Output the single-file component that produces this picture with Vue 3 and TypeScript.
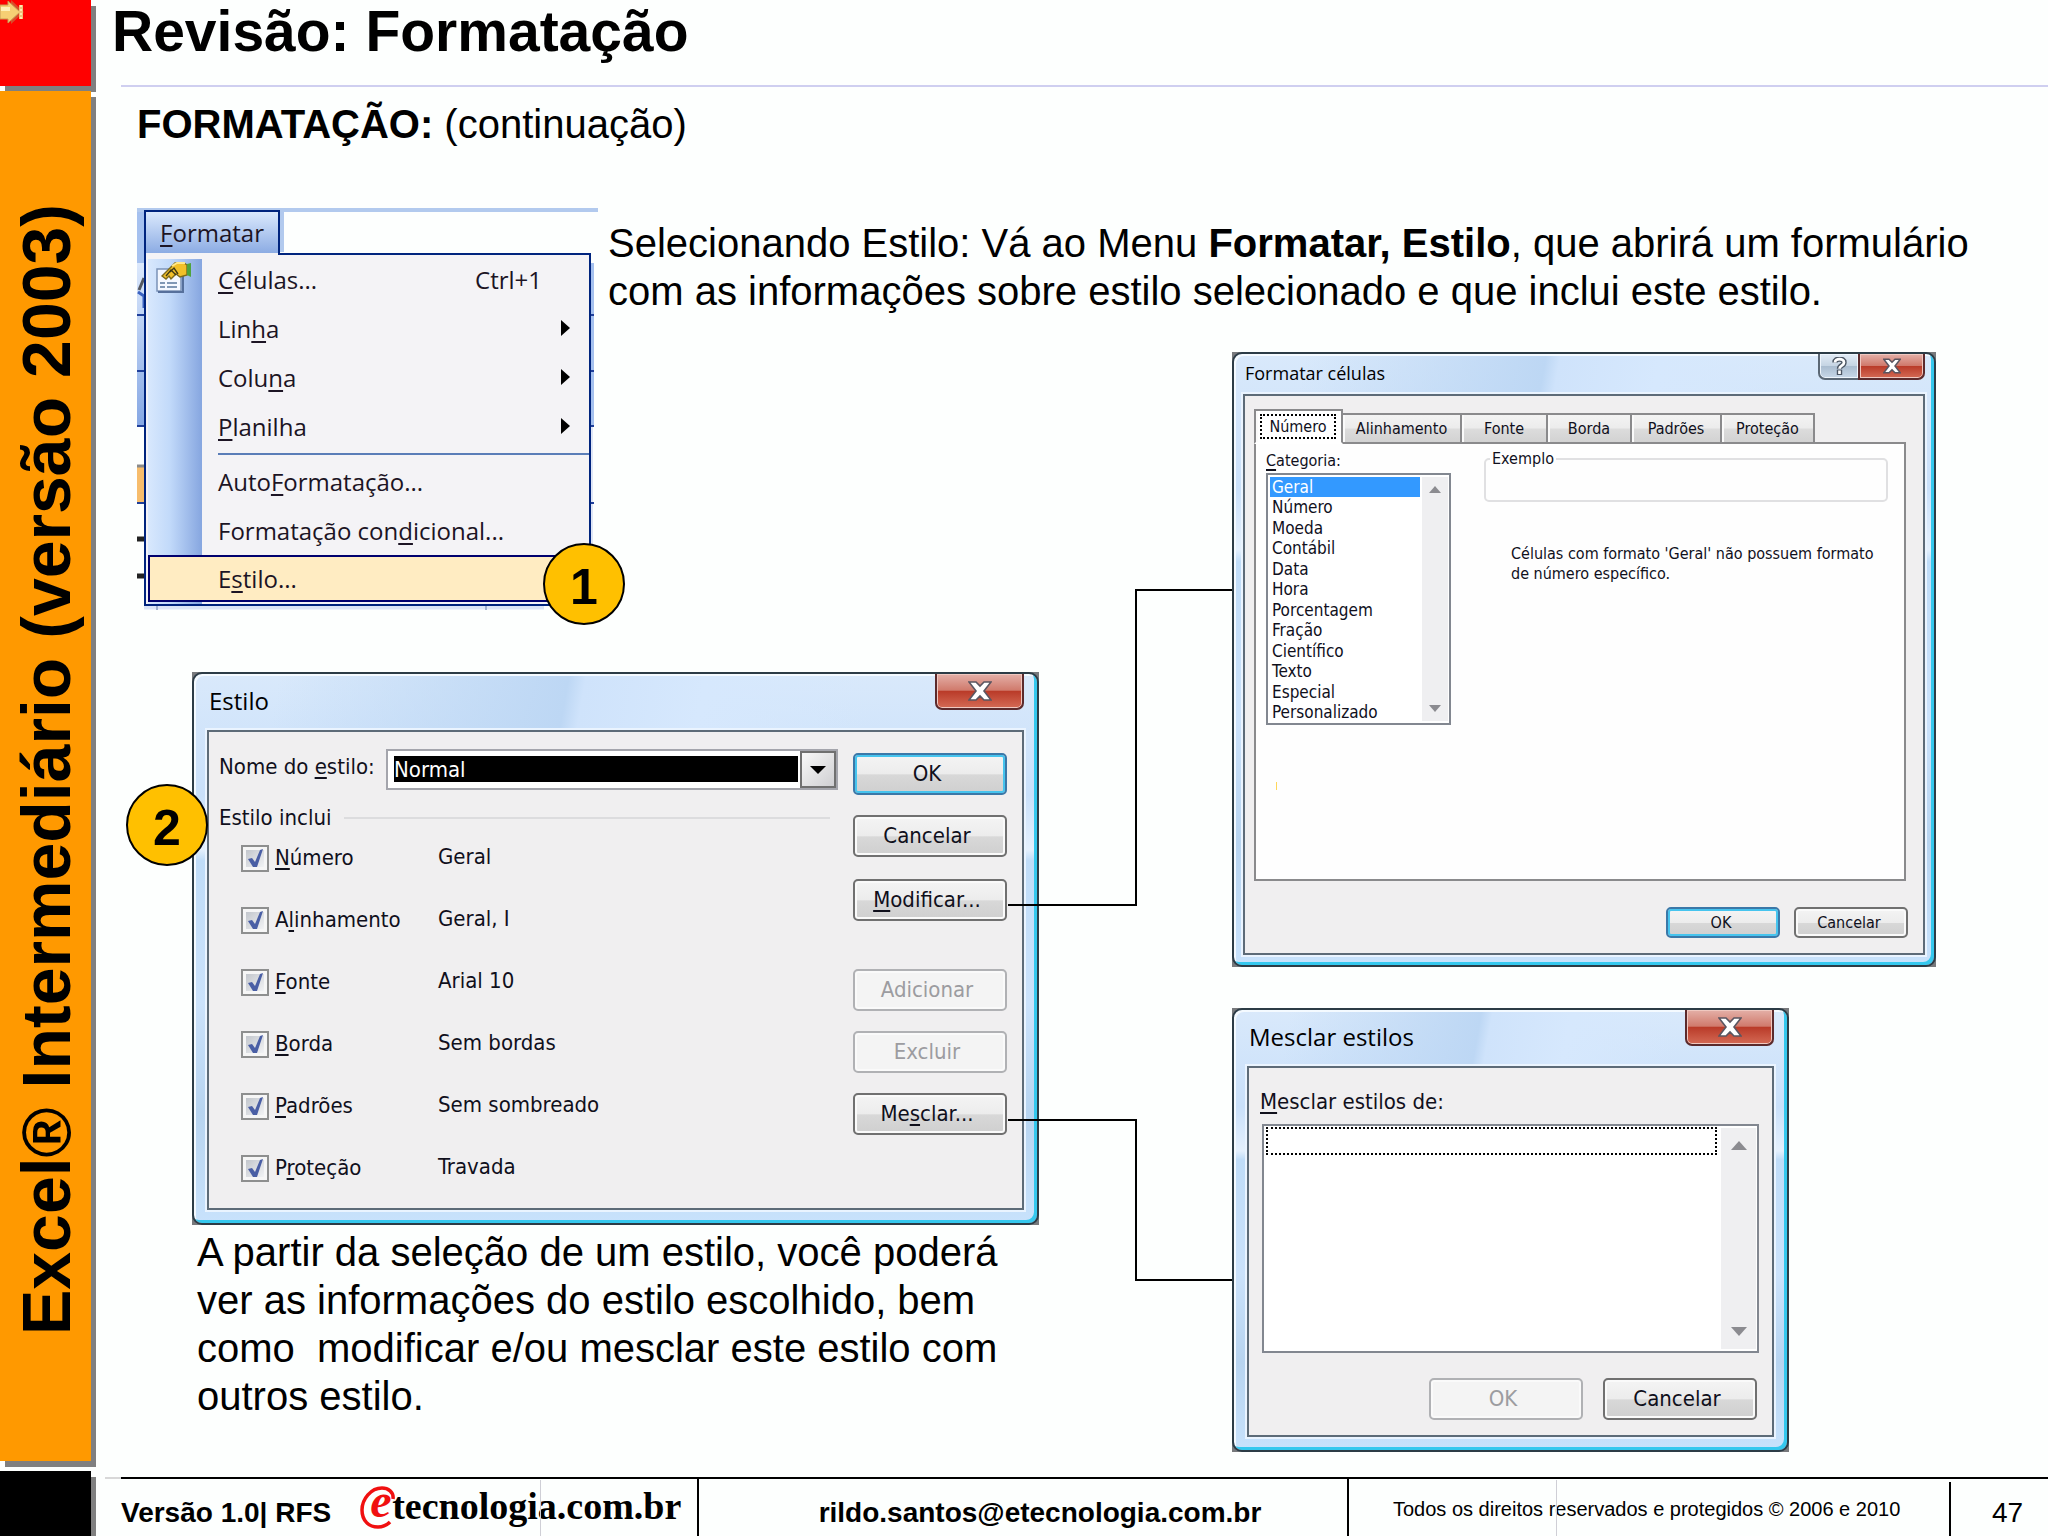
<script setup lang="ts">
import { ref } from 'vue'

/** A caption whose middle part is the underlined access key. */
type Caption = [before: string, key: string, after: string]

interface MenuEntry {
  caption: Caption
  shortcut?: string
  submenu?: boolean
}

interface StyleOption {
  id: string
  caption: Caption
  value: string
}

const menuTop: MenuEntry[] = [
  { caption: ['', 'C', 'élulas...'], shortcut: 'Ctrl+1' },
  { caption: ['Lin', 'h', 'a'], submenu: true },
  { caption: ['Colu', 'n', 'a'], submenu: true },
  { caption: ['', 'P', 'lanilha'], submenu: true },
]

const menuBottom: MenuEntry[] = [
  { caption: ['Auto', 'F', 'ormatação...'] },
  { caption: ['Formatação con', 'd', 'icional...'] },
]

const styleOptions: StyleOption[] = [
  { id: 'numero', caption: ['', 'N', 'úmero'], value: 'Geral' },
  { id: 'alinhamento', caption: ['A', 'l', 'inhamento'], value: 'Geral, I' },
  { id: 'fonte', caption: ['', 'F', 'onte'], value: 'Arial 10' },
  { id: 'borda', caption: ['', 'B', 'orda'], value: 'Sem bordas' },
  { id: 'padroes', caption: ['', 'P', 'adrões'], value: 'Sem sombreado' },
  { id: 'protecao', caption: ['P', 'r', 'oteção'], value: 'Travada' },
]

const tabs = ['Número', 'Alinhamento', 'Fonte', 'Borda', 'Padrões', 'Proteção']

const categories = [
  'Geral', 'Número', 'Moeda', 'Contábil', 'Data', 'Hora',
  'Porcentagem', 'Fração', 'Científico', 'Texto', 'Especial', 'Personalizado',
]

const checked = ref<string[]>(styleOptions.map((o) => o.id))
const styleName = ref('Normal')
const activeTab = ref('Número')
const category = ref('Geral')
</script>

<template>
  <div class="slide">
    <aside class="rail">
      <div class="block block-red">
        <svg class="arrow" viewBox="0 0 24 24" width="24" height="24" aria-hidden="true">
          <path d="M0 5h1v14H0zM3 5h8V0l13 12-13 12v-5H3z" fill="#b98a4c" opacity=".55" />
          <path d="M0 5h8V1l12 11L8 23v-4H0z" fill="#f6cf74" stroke="#c79a55" />
          <path d="M1 7h9v4H1z" fill="#fff0b8" />
          <path d="M21 5v14" stroke="#f0c078" stroke-width="4" />
          <path d="M21 5v14" stroke="#ffe9b0" stroke-width="2" stroke-dasharray="2 2" />
        </svg>
      </div>
      <div class="block block-orange"><span class="course">Excel® Intermediário (versão 2003)</span></div>
      <div class="block block-black"></div>
    </aside>

    <main class="main">
      <header class="head"><h1>Revisão: Formatação</h1></header>
      <h2><b>FORMATAÇÃO:</b> (continuação)</h2>

      <div class="board">
        <section class="menu-shot">
          <svg class="sheet" viewBox="0 0 461 402" width="461" height="402" aria-hidden="true">
            <defs>
              <linearGradient id="bar" x1="0" y1="0" x2="0" y2="1">
                <stop offset="0" stop-color="#dce9fc" />
                <stop offset="1" stop-color="#86a8e4" />
              </linearGradient>
            </defs>
            <path d="M0 0h461v4H147v40h-8V4H0z" fill="#b2caee" />
            <path d="M0 4h7v51H0z" fill="#a5c1ef" />
            <path d="M0 55h7v52H0zM0 108h7v54H0zM0 164h7v53H0z" fill="url(#bar)" />
            <path d="M454 55h3v162h-3z" fill="#a5c1ef" />
            <path d="M454 217h2v130h-2z" fill="#dfe6f6" />
            <path d="M0 107h7M0 163h7M0 218h7M0 295h7M454 107h3M454 163h3M454 218h3M454 295h3" stroke="#1f3f9a" stroke-width="2" />
            <path d="M2 82l5-12" stroke="#55585f" stroke-width="3" />
            <path d="M1 84l6 4v12" fill="none" stroke="#3b62c0" stroke-width="3" />
            <path d="M0 258h7v36H0z" fill="#f7bd6c" />
            <path d="M0 258h7" stroke="#8a8a8a" stroke-width="3" />
            <path d="M0 331h7M0 368h7" stroke="#222" stroke-width="5" />
            <path d="M7 399h400" stroke="#dbe5f8" stroke-width="5" />
            <path d="M20 398v5M349 398v5" stroke="#9fb0d0" stroke-width="2" />
          </svg>
          <button class="menu-tab" type="button"><u>F</u>ormatar</button>
          <ul class="menu">
            <li v-for="(m, i) in menuTop" :key="i">
              <button type="button" class="item">
                <span class="item-icon">
                  <svg v-if="i === 0" viewBox="0 0 36 32" width="36" height="32" aria-hidden="true">
                    <path d="M1 7h24v22H1z" fill="#f4f8ff" stroke="#7b93b8" stroke-width="1.5" />
                    <path d="M2 30h25V9" fill="none" stroke="#56709c" stroke-width="2" />
                    <path d="M4 21h5M11 21h10M4 25h5M11 25h10" stroke="#7f97b5" stroke-width="2" />
                    <path d="M6 14l8-8 5-5h9l3 2v10l-7 2-4-3-5 5-2-3-3 3z" fill="#f2c029" stroke="#7c6a1c" stroke-width="1.4" />
                    <path d="M10 14l5-6 5 5M14 10l4-4 4 6" fill="none" stroke="#3f3a14" stroke-width="1.4" />
                    <path d="M16 4l5-3h8" fill="none" stroke="#ffe88c" stroke-width="2" />
                    <path d="M31 2l4-1v14l-4-2z" fill="#4fa33c" />
                  </svg>
                </span>
                <span>{{ m.caption[0] }}<u>{{ m.caption[1] }}</u>{{ m.caption[2] }}</span>
                <span v-if="m.shortcut" class="shortcut">{{ m.shortcut }}</span>
                <svg v-if="m.submenu" class="chevron" viewBox="0 0 9 16" width="9" height="16" aria-hidden="true">
                  <path d="M0 0l9 8-9 8z" />
                </svg>
              </button>
            </li>
            <li class="rule" role="separator"></li>
            <li v-for="m in menuBottom" :key="m.caption[1]">
              <button type="button" class="item">
                <span class="item-icon"></span>
                <span>{{ m.caption[0] }}<u>{{ m.caption[1] }}</u>{{ m.caption[2] }}</span>
              </button>
            </li>
            <li>
              <button type="button" class="item hot">
                <span class="item-icon"></span><span>E<u>s</u>tilo...</span>
              </button>
            </li>
          </ul>
          <span class="badge badge-one">1</span>
        </section>

        <p class="lead">
          Selecionando Estilo: Vá ao Menu <b>Formatar, Estilo</b>, que abrirá um formulário<br />
          com as informações sobre estilo selecionado e que inclui este estilo.
        </p>

        <div class="left">
          <section class="win win-style">
            <div class="frame">
              <div class="bar">
                <h3>Estilo</h3>
                <button type="button" class="close" aria-label="Fechar">
                  <svg viewBox="0 0 24 20" width="24" height="20" aria-hidden="true">
                    <path d="M1 1h7l4 4 4-4h7l-7 9 7 9h-7l-4-4-4 4H1l7-9z" fill="#fff" stroke="#5a5560" stroke-width="1.6" />
                  </svg>
                </button>
              </div>
              <div class="pane style-pane">
                <div class="style-form">
                  <div class="name-row">
                    <label for="style-name">Nome do <u>e</u>stilo:</label>
                    <span class="combo">
                      <select id="style-name" v-model="styleName"><option>Normal</option></select>
                      <span class="combo-arrow">
                        <svg viewBox="0 0 16 8" width="16" height="8" aria-hidden="true"><path d="M0 0h16L8 8z" /></svg>
                      </span>
                    </span>
                  </div>
                  <fieldset class="includes">
                    <legend>Estilo inclui</legend>
                    <div v-for="o in styleOptions" :key="o.id" class="include">
                      <span class="tick">
                        <input :id="o.id" v-model="checked" type="checkbox" :value="o.id" />
                        <svg v-if="checked.includes(o.id)" viewBox="0 0 28 27" width="28" height="27" aria-hidden="true">
                          <path d="M7 14l4-1 3 4 5-12 3-1-6 18h-4z" fill="#4a5fa5" />
                        </svg>
                      </span>
                      <label :for="o.id">{{ o.caption[0] }}<u>{{ o.caption[1] }}</u>{{ o.caption[2] }}</label>
                      <output :for="o.id">{{ o.value }}</output>
                    </div>
                  </fieldset>
                </div>
                <div class="style-actions">
                  <button type="button" class="btn primary">OK</button>
                  <button type="button" class="btn">Cancelar</button>
                  <button type="button" class="btn modify"><span><u>M</u>odificar...</span></button>
                  <button type="button" class="btn" disabled>Adicionar</button>
                  <button type="button" class="btn" disabled>Excluir</button>
                  <button type="button" class="btn"><span>Me<u>s</u>clar...</span></button>
                </div>
              </div>
            </div>
            <span class="badge badge-two">2</span>
          </section>
          <p class="note">
            A partir da seleção de um estilo, você poderá<br />
            ver as informações do estilo escolhido, bem<br />
            como&nbsp; modificar e/ou mesclar este estilo com<br />
            outros estilo.
          </p>
        </div>

        <div class="right">
          <section class="win win-format">
            <div class="frame">
              <div class="bar">
                <h3>Formatar células</h3>
                <button type="button" class="help" aria-label="Ajuda">
                  <svg viewBox="0 0 16 20" width="15" height="18" aria-hidden="true">
                    <path d="M3 6c0-5 10-5 10 0 0 4-5 3-5 7" fill="none" stroke="#4c5663" stroke-width="6" />
                    <path d="M5 14h6v6H5z" fill="#4c5663" />
                    <path d="M3 6c0-5 10-5 10 0 0 4-5 3-5 7M8 15v4" fill="none" stroke="#fff" stroke-width="3" />
                  </svg>
                </button>
                <button type="button" class="close" aria-label="Fechar">
                  <svg viewBox="0 0 24 20" width="18" height="16" aria-hidden="true">
                    <path d="M1 1h7l4 4 4-4h7l-7 9 7 9h-7l-4-4-4 4H1l7-9z" fill="#fff" stroke="#5a5560" stroke-width="2" />
                  </svg>
                </button>
              </div>
              <div class="pane format-pane">
                <div class="tabs" role="tablist">
                  <button
                    v-for="t in tabs"
                    :key="t"
                    type="button"
                    role="tab"
                    class="tab"
                    :class="{ active: t === activeTab }"
                    :aria-selected="t === activeTab"
                    @click="activeTab = t"
                  ><span>{{ t }}</span></button>
                </div>
                <div class="sheet-page">
                  <div class="category">
                    <label for="category"><u>C</u>ategoria:</label>
                    <div class="listbox">
                      <select id="category" v-model="category" size="12">
                        <option v-for="c in categories" :key="c">{{ c }}</option>
                      </select>
                      <span class="scroll">
                        <svg viewBox="0 0 12 7" width="12" height="7" aria-hidden="true"><path d="M6 0l6 7H0z" /></svg>
                        <svg viewBox="0 0 12 7" width="12" height="7" aria-hidden="true"><path d="M0 0h12L6 7z" /></svg>
                      </span>
                    </div>
                    <i class="caret"></i>
                  </div>
                  <div class="detail">
                    <fieldset class="sample"><legend>Exemplo</legend></fieldset>
                    <p>Células com formato 'Geral' não possuem formato<br />de número específico.</p>
                  </div>
                </div>
                <div class="actions">
                  <button type="button" class="btn primary">OK</button>
                  <button type="button" class="btn">Cancelar</button>
                </div>
              </div>
            </div>
          </section>

          <section class="win win-merge">
            <div class="frame">
              <div class="bar">
                <h3>Mesclar estilos</h3>
                <button type="button" class="close" aria-label="Fechar">
                  <svg viewBox="0 0 24 20" width="24" height="20" aria-hidden="true">
                    <path d="M1 1h7l4 4 4-4h7l-7 9 7 9h-7l-4-4-4 4H1l7-9z" fill="#fff" stroke="#5a5560" stroke-width="1.6" />
                  </svg>
                </button>
              </div>
              <div class="pane merge-pane">
                <label for="merge-from"><u>M</u>esclar estilos de:</label>
                <div class="listbox">
                  <select id="merge-from" size="8"><option aria-label="vazio"></option></select>
                  <span class="scroll">
                    <svg viewBox="0 0 16 9" width="16" height="9" aria-hidden="true"><path d="M8 0l8 9H0z" /></svg>
                    <svg viewBox="0 0 16 9" width="16" height="9" aria-hidden="true"><path d="M0 0h16L8 9z" /></svg>
                  </span>
                </div>
                <div class="actions">
                  <button type="button" class="btn" disabled>OK</button>
                  <button type="button" class="btn">Cancelar</button>
                </div>
              </div>
            </div>
          </section>
        </div>

        <svg class="links" viewBox="0 0 224 694" width="224" height="694" aria-hidden="true">
          <path d="M0 317h128V2h96M0 532h128v160h96" fill="none" stroke="#000" stroke-width="2" />
        </svg>
      </div>

      <footer class="foot">
        <div class="cell version">
          <b>Versão 1.0| RFS</b>
          <a class="logo" href="#" aria-label="etecnologia.com.br">
            <span class="logo-e">
              <svg viewBox="0 0 40 60" width="40" height="60" aria-hidden="true">
                <path d="M34 23C35 16 29 12 23 12 12 12 3 23 3 34c0 11 7 17 16 17 5 0 9-2 12-5" fill="none" stroke="#f01010" stroke-width="3.5" />
              </svg>
              <em>e</em>
            </span>
            <span class="logo-text">tecnologia.com.br</span>
          </a>
        </div>
        <div class="cell mail"><b>rildo.santos@etecnologia.com.br</b></div>
        <div class="cell rights"><span>Todos os direitos reservados e protegidos © 2006 e 2010</span></div>
        <div class="cell page">47</div>
      </footer>
    </main>
  </div>
</template>

<style>
body {
  margin: 0;
  background: #fdfffe;
}
</style>

<style scoped>
.slide {
  --sans: "Liberation Sans", Arial, sans-serif;
  --ui: "DejaVu Sans Condensed", "DejaVu Sans", sans-serif;
  --segoe: "Open Sans", "Noto Sans", sans-serif;
  display: flex;
  gap: 14px;
  min-height: 100vh;
  overflow: hidden;
  color: #000;
  font-family: var(--sans);
}
.slide *,
.slide *::before,
.slide *::after { box-sizing: border-box; }
h1, h2, h3, p, ul, fieldset { margin: 0; padding: 0; }
button, select, input { margin: 0; font: inherit; color: inherit; }
u { text-underline-offset: 3px; text-decoration-thickness: 2px; text-decoration-skip-ink: none; }

/* Left rail */
.rail { display: flex; flex: none; flex-direction: column; width: 91px; }
.block { box-shadow: 5px 6px 0 #808080; clip-path: inset(0 -5px -6px 0); }
.block-red { height: 86px; margin-bottom: 5px; background: #f00; }
.block-orange {
  display: flex;
  flex: 1;
  align-items: center;
  justify-content: center;
  margin-bottom: 10px;
  padding-bottom: 12px;
  background: #f90;
}
.block-black { height: 65px; background: #000; }
.arrow { display: block; }
.course {
  writing-mode: vertical-rl;
  text-orientation: sideways;
  transform: rotate(180deg);
  font-size: 68px;
  font-weight: 700;
  line-height: 76px;
  white-space: nowrap;
}

/* Headings */
.main { display: flex; flex: 1; flex-direction: column; min-width: 0; }
.head { height: 87px; background: linear-gradient(#cfcff0, #cfcff0) 16px 100% / 100% 2px no-repeat; }
h1 { padding-left: 7px; font-size: 57px; line-height: 62px; }
h2 { padding: 13px 0 0 32px; font-size: 40px; font-weight: 400; line-height: 48px; }

.board {
  position: relative;
  display: grid;
  flex: 1;
  grid-template-columns: 471px 624px minmax(0, 1fr);
  grid-template-rows: 144px auto 1fr;
  margin-top: 60px;
  padding: 0 0 20px 32px;
}
.lead { grid-area: 1 / 2 / 2 / 4; padding-top: 11px; font-size: 40px; line-height: 48px; white-space: nowrap; }
.left { grid-area: 3 / 1 / 4 / 3; padding-left: 55px; }
.right { display: flex; grid-area: 2 / 3 / 4 / 4; flex-direction: column; gap: 41px; }
.note { padding: 3px 0 0 5px; font-size: 40px; line-height: 48px; }
.links { position: absolute; top: 380px; left: 903px; }

.badge {
  position: absolute;
  display: grid;
  place-items: center;
  width: 82px;
  height: 82px;
  padding-top: 6px;
  border: 2px solid #000;
  border-radius: 50%;
  background: #ffc000;
  color: #000;
  font-family: var(--sans);
  font-size: 50px;
  font-weight: 700;
}
.badge-one { top: 335px; left: 406px; }
.badge-two { top: 112px; left: -66px; }

/* Drop-down menu */
.menu-shot {
  position: relative;
  grid-area: 1 / 1 / 3 / 2;
  width: 461px;
  height: 402px;
  margin-bottom: 62px;
  padding: 2px 0 0 7px;
  color: #1c1424;
  font-family: var(--segoe);
  font-size: 24px;
}
.sheet { position: absolute; top: 0; left: 0; }
.menu-tab {
  position: relative;
  display: block;
  width: 136px;
  height: 45px;
  padding: 0 0 3px;
  border: 2px solid #00247e;
  border-bottom: 0;
  background: linear-gradient(#dbe9fd, #88a9e2);
  line-height: 39px;
}
.menu {
  position: relative;
  width: 447px;
  margin-top: -2px;
  padding: 0;
  border: 2px solid #00247e;
  background:
    linear-gradient(90deg, #d8e8fd, #c2dafa 40%, #86a6e0) 2px 4px / 54px 100% no-repeat,
    #f4f3f6;
  list-style: none;
}
.menu::before {
  position: absolute;
  top: -2px;
  left: 0;
  width: 132px;
  height: 2px;
  background: #f4f3f6;
  content: "";
}
.item {
  display: flex;
  align-items: center;
  width: 100%;
  height: 49px;
  padding: 0 19px 1px 0;
  border: 0;
  background: none;
  text-align: left;
}
.item-icon { flex: none; width: 72px; padding: 2px 0 0 10px; line-height: 0; }
.item-icon svg { margin-top: -4px; }
.shortcut { margin-left: auto; padding-right: 28px; }
.chevron { margin-left: auto; }
.rule { height: 6px; margin-left: 72px; background: linear-gradient(#5a7db8, #5a7db8) 0 2px / 100% 2px no-repeat; }
.hot { width: auto; min-width: calc(100% - 4px); height: 47px; margin: 0 2px 2px; border: 2px solid #00006e; background: #ffecc2; }
.hot .item-icon { width: 68px; }

/* Glass dialog windows */
.win { position: relative; background: #77797c; color: #10101c; font-family: var(--ui); font-size: 22px; }
.win-style { width: 847px; }
.win-format { width: 704px; font-size: 16px; }
.win-merge { width: 557px; }
.frame {
  padding: 0 13px 13px;
  border: 2px solid #2c3c46;
  border-radius: 10px;
  background:
    linear-gradient(100deg, transparent 10%, #bdd7f4 44%, #cfe3fb 46%, #d6e8fd 60%, transparent 80%) 0 0 / 100% 58px no-repeat,
    linear-gradient(#d9e9fb, #c9e0fa 22%, #e4f0fd 32%, #bfdcf8 34%, #cbe2fb 60%, #b7d4f0 80%, #c8e2fc);
  box-shadow: inset -3px -3px 0 #35c8ee, inset 2px 2px 0 #f4faff;
}
.bar { display: flex; align-items: flex-start; height: 56px; }
h3 { flex: 1; padding: 7px 0 0 2px; color: #000; font-family: var(--segoe); font-size: 24px; font-weight: 400; line-height: 40px; }
.close,
.help {
  display: grid;
  place-items: center;
  width: 89px;
  height: 36px;
  padding: 0;
  border: 2px solid #5b2a2c;
  border-top: 0;
  border-radius: 0 0 7px 7px;
  background: linear-gradient(#e4b0a8, #d07a6c 48%, #b93a28 50%, #d46a55);
  box-shadow: inset 0 0 0 1px #f0c8c0;
}
.pane { border: 2px solid #5d6b78; background: #f0eff0; box-shadow: 0 0 0 2px #eaf4ff; }

.win-format .frame { padding: 0 9px 10px; }
.win-format .bar { height: 40px; }
.win-format h3 { padding-top: 4px; font-size: 18px; line-height: 30px; }
.win-format .close { width: 67px; height: 26px; border-radius: 0 0 7px 0; }
.help {
  width: 40px;
  height: 26px;
  border-color: #5b6875;
  border-right: 0;
  border-radius: 0 0 0 7px;
  background: linear-gradient(#e2ecf6, #c6d5e4 48%, #a9bccf 50%, #c8d8e8);
  box-shadow: inset 0 0 0 1px #eef5fc;
}

.btn {
  display: grid;
  place-items: center;
  width: 154px;
  height: 42px;
  padding: 0 6px 2px 0;
  border: 2px solid #707070;
  border-radius: 5px;
  background: linear-gradient(#f4f4f4, #ececec 50%, #d8d8d8 52%, #cfcfcf);
  box-shadow: inset 0 0 0 2px #fafafa;
}
.btn.primary { border-color: #3b78a8; box-shadow: inset 0 0 0 2px #46c4ee; }
.btn:disabled { border-color: #b0b1b4; background: #f4f4f4; color: #9c9ca0; }
.win-format .btn { width: 114px; height: 31px; padding: 0 4px 1px 0; }
.actions { display: flex; justify-content: flex-end; gap: 14px; }

/* Estilo */
.style-pane { display: flex; justify-content: space-between; height: 480px; padding: 17px 15px 0 10px; }
.style-form { width: 619px; }
.style-actions { display: flex; flex-direction: column; gap: 20px; padding-top: 4px; }
.style-actions .modify { margin: 2px 0 28px; }
.name-row { display: flex; }
.name-row label { width: 167px; line-height: 36px; }
.combo { position: relative; flex: 1; height: 41px; }
.combo select {
  width: 100%;
  height: 100%;
  padding: 5px 38px 6px 6px;
  border: 2px solid #a4a5ac;
  border-radius: 0;
  appearance: none;
  background: linear-gradient(#000, #000) content-box, #fff;
  color: #fff;
}
.combo-arrow {
  position: absolute;
  top: 2px;
  right: 2px;
  display: grid;
  place-items: center;
  width: 36px;
  height: 37px;
  border: 2px solid #707070;
  background: linear-gradient(135deg, #f8f8f8, #cfcfd2);
  pointer-events: none;
}
.includes { min-width: 0; margin-top: 16px; border: 0; }
.includes legend {
  display: flex;
  align-items: center;
  gap: 13px;
  width: 611px;
  margin-bottom: 13px;
  padding: 0;
  line-height: 24px;
}
.includes legend::after { flex: 1; height: 2px; background: #dcdcde; content: ""; }
.include { display: grid; grid-template-columns: 28px 163px 1fr; align-items: center; height: 30px; margin: 0 0 32px 22px; }
.include label { padding-left: 6px; line-height: 30px; }
.include output { padding: 0 0 4px 6px; white-space: nowrap; }
.tick { position: relative; height: 27px; }
.tick input {
  display: block;
  width: 28px;
  height: 27px;
  border: 2px solid #8e8f8f;
  appearance: none;
  background: linear-gradient(135deg, #c2c6cc, #f2f3f5) center / 18px 17px no-repeat, #f6f6f6;
}
.tick svg { position: absolute; top: 0; left: 0; pointer-events: none; }

/* Formatar células */
.format-pane { height: 561px; padding: 13px 15px 0 9px; }
.tabs { position: relative; z-index: 1; display: flex; align-items: flex-end; }
.tab {
  height: 31px;
  padding: 0 10px;
  border: 2px solid #8a8a8c;
  border-left-width: 0;
  background: linear-gradient(#f3f3f3, #ececec 48%, #dcdcdc 52%, #d2d2d2);
  box-shadow: inset 2px 0 0 #fafafa;
  line-height: 27px;
}
.tab:nth-child(2) { width: 119px; }
.tab:nth-child(3) { width: 86px; }
.tab:nth-child(4) { width: 84px; }
.tab:nth-child(5) { width: 90px; }
.tab:nth-child(6) { width: 93px; }
.tab.active { width: 89px; height: 35px; padding: 0; border-left-width: 2px; border-bottom-color: #fff; background: #fff; }
.tab.active span { display: block; margin: 0 5px 0 4px; border: 2px dotted #000; line-height: 21px; }
.sheet-page {
  display: flex;
  gap: 33px;
  width: 652px;
  height: 439px;
  margin-top: -2px;
  padding-left: 10px;
  border: 2px solid #8a8a8c;
  background: #fefefe;
}
.category { width: 185px; padding-top: 7px; line-height: 20px; }
.category label { display: block; height: 22px; }
.listbox { display: flex; border: 2px solid #828790; background: #fff; }
.listbox select { flex: 1; min-width: 0; overflow: hidden; border: 0; border-radius: 0; outline: 0; background: none; }
.category select { height: 248px; padding: 2px 0 0; font-size: 17px; }
.category option { min-height: 20px; margin-left: 2px; padding: 0 0 0 2px; line-height: 20px; }
.category option:nth-child(even) { min-height: 21px; }
.category option:checked { background: linear-gradient(#3399ff, #3399ff); color: #fff; }
.scroll {
  display: flex;
  flex-direction: column;
  align-items: center;
  justify-content: space-between;
  width: 26px;
  margin: 2px 1px 2px 2px;
  padding: 9px 0;
  background: #efeff1;
  fill: #8b8b90;
}
.caret { display: block; width: 1px; height: 8px; margin: 57px 0 0 10px; background: #ffd75a; }
.detail { width: 404px; padding-top: 5px; line-height: 20px; }
.sample { height: 53px; border: 2px solid #e0e0e2; border-radius: 5px; }
.sample legend { margin-left: 4px; padding: 0 2px; }
.detail p { padding: 42px 0 0 27px; white-space: nowrap; }
.format-pane .actions { margin-top: 26px; }

/* Mesclar estilos */
.merge-pane { height: 371px; padding: 20px 13px 0; }
.merge-pane label { display: block; margin: 0 0 8px -2px; line-height: 28px; }
.merge-pane select { height: 225px; padding: 1px 2px; }
.merge-pane option { height: 28px; min-height: 28px; padding: 0; border: 2px dotted #000; }
.merge-pane .scroll { width: 35px; padding: 13px 0; }
.merge-pane .actions { gap: 20px; margin-top: 25px; padding-right: 2px; }

/* Footer */
.foot {
  display: grid;
  grid-template-columns: 594px 650px minmax(0, 1fr) 99px;
  height: 59px;
  background: linear-gradient(90deg, #d8d8d8 16px, #000 16px) 0 0 / 100% 2px no-repeat;
}
.cell { position: relative; display: flex; align-items: center; padding-top: 12px; border-right: 2px solid #000; font-size: 28px; white-space: nowrap; }
.version { padding-left: 16px; }
.version::after,
.rights::before { position: absolute; top: 3px; left: 435px; width: 1px; height: 56px; background: #cfcfd6; content: ""; }
.rights::before { left: 207px; }
.mail { justify-content: center; padding-left: 34px; }
.rights { padding: 6px 0 0 44px; border-right: 0; font-size: 20px; }
.page { margin-top: 5px; padding: 8px 0 0 41px; border-right: 0; border-left: 2px solid #000; }
.logo { display: flex; align-items: center; margin: -14px 0 0 28px; color: #000; font-family: "Liberation Serif", serif; font-weight: 700; text-decoration: none; }
.logo-e { position: relative; width: 33px; height: 60px; }
.logo-e svg { position: absolute; top: 0; left: 0; }
.logo-e em { position: absolute; top: 1px; left: 11px; color: #f01010; font-size: 48px; line-height: 48px; }
.logo-text { position: relative; font-size: 38px; line-height: 48px; }
</style>
